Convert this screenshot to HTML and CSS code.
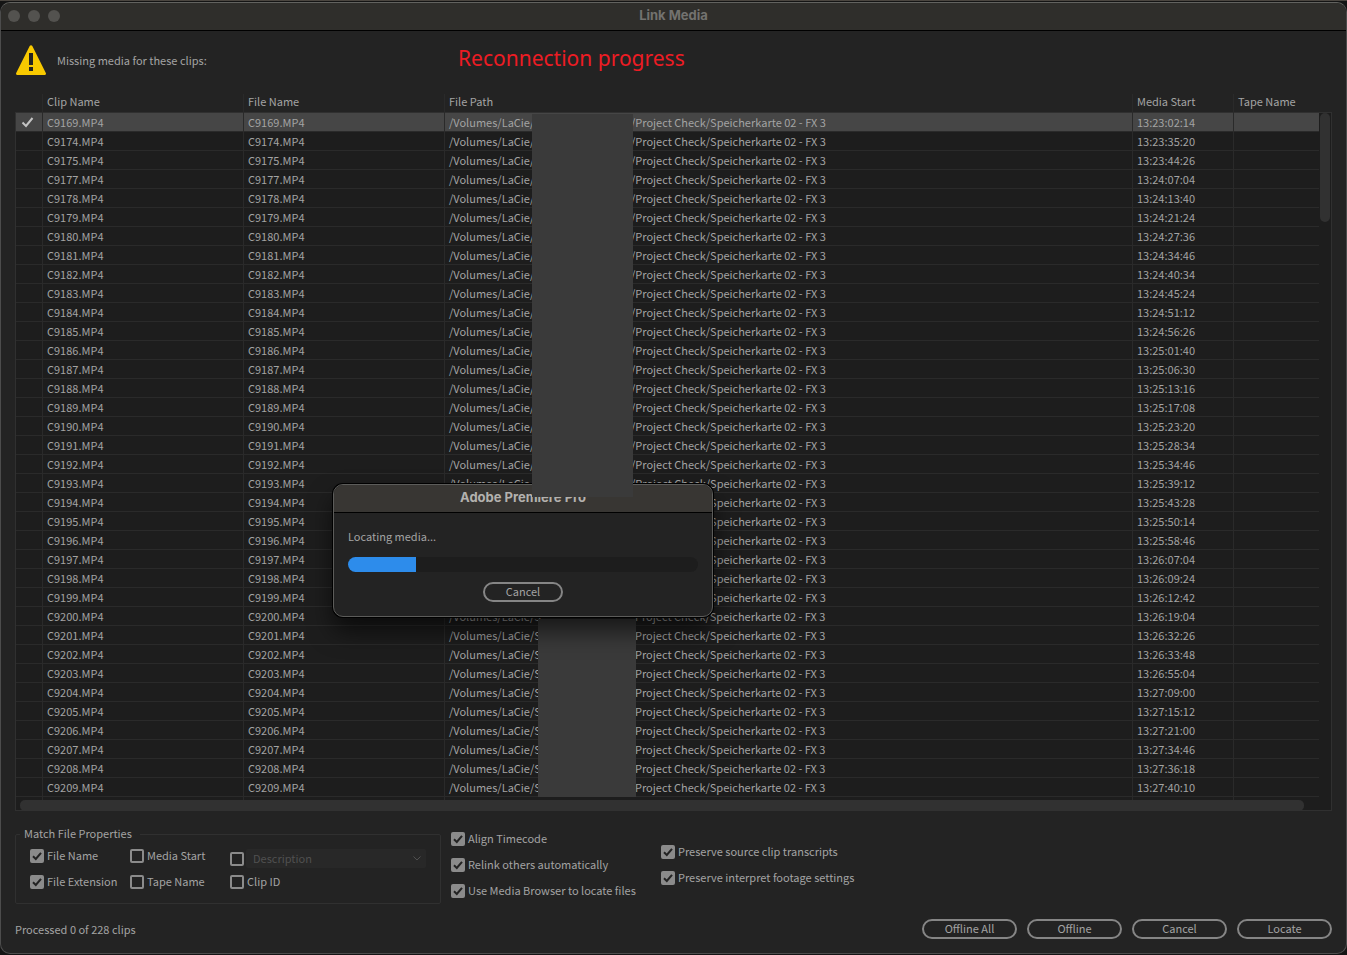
FILE: index.html
```html
<!DOCTYPE html>
<html lang="en">
<head>
    <meta charset="UTF-8">
    <meta name="viewport" content="width=device-width, initial-scale=1.0">
    <title>Link Media</title>
    <link rel="stylesheet" href="styles.css">
</head>
<body>

<div class="window">
    <div class="titlebar">
        <div class="lights"><span></span><span></span><span></span></div>
        <h1>Link Media</h1>
    </div>

    <div class="content">
        <div class="notice">
            <svg class="warning" viewBox="0 0 30 30" aria-hidden="true">
                <path d="M15 0.3c.6 0 1 .3 1.3.8L29.8 28c.5 1 0 2-1 2H1.2c-1 0-1.500-1-1-2L13.700 1.100C14 .6 14.400.3 15 .3z" fill="#f8c900"/>
                <path d="M13 8h4v12h-4zM13 22h4v4h-4z" fill="#232323"/>
            </svg>
            <span>Missing media for these clips:</span>
            <strong class="annotation">Reconnection progress</strong>
        </div>

        <div class="list">
            <div class="frame"></div>
            <div class="scroller">
                <table>
                    <colgroup>
                        <col class="col-check"><col class="col-name"><col class="col-name"><col><col class="col-start"><col class="col-tape">
                    </colgroup>
                    <thead>
                        <tr><th></th><th>Clip Name</th><th>File Name</th><th>File Path</th><th>Media Start</th><th>Tape Name</th></tr>
                    </thead>
                    <tbody id="clips"></tbody>
                </table>
            </div>
            <div class="scroll-y"></div>
            <div class="scroll-x"></div>
            <div class="redact redact-top"></div>
            <div class="redact redact-bottom"></div>
        </div>

        <div class="options">
            <fieldset>
                <legend>Match File Properties</legend>
                <div class="checks">
                    <label><input type="checkbox" checked>File Name</label>
                    <label><input type="checkbox" checked>File Extension</label>
                </div>
                <div class="checks">
                    <label><input type="checkbox">Media Start</label>
                    <label><input type="checkbox">Tape Name</label>
                </div>
                <div class="checks checks-wide">
                    <div class="describe">
                        <input type="checkbox" aria-label="Match description">
                        <select aria-label="Property" disabled><option>Description</option></select>
                    </div>
                    <label><input type="checkbox">Clip ID</label>
                </div>
            </fieldset>
            <div class="checks relink">
                <label><input type="checkbox" checked>Align Timecode</label>
                <label><input type="checkbox" checked>Relink others automatically</label>
                <label><input type="checkbox" checked>Use Media Browser to locate files</label>
            </div>
            <div class="checks preserve">
                <label><input type="checkbox" checked>Preserve source clip transcripts</label>
                <label><input type="checkbox" checked>Preserve interpret footage settings</label>
            </div>
        </div>

        <div class="footer">
            <span>Processed 0 of 228 clips</span>
            <div class="buttons">
                <button type="button">Offline All</button>
                <button type="button">Offline</button>
                <button type="button">Cancel</button>
                <button type="button">Locate</button>
            </div>
        </div>
    </div>
</div>

<div class="dialog" role="dialog" aria-labelledby="dialogTitle">
    <h2 id="dialogTitle">Adobe Premiere Pro</h2>
    <div class="dialog-body">
        <label for="locating">Locating media...</label>
        <progress id="locating" value="68" max="350"></progress>
        <button type="button">Cancel</button>
    </div>
</div>

<script src="script.js"></script>
</body>
</html>
```
FILE: styles.css
```css
* {
    box-sizing: border-box;
}

body {
    margin: 0;
    height: 100vh;
    padding: 1px 0;
    background-color: #141414;
    border-top: 1px solid #4b4640;
    color: #a3a3a3;
    font-family: "Noto Sans CJK SC", "Open Sans", sans-serif;
    font-size: 11px;
    line-height: 16px;
    overflow: hidden;
}

.window {
    display: flex;
    flex-direction: column;
    height: 100%;
    background-color: #232323;
    border: 1px solid #4c4c4c;
    border-top-color: #62625f;
    border-radius: 10px;
    overflow: hidden;
}

.titlebar {
    position: relative;
    flex: none;
    height: 28px;
    background-color: #2f2e2b;
    border-bottom: 1px solid #000;
}

.lights {
    position: absolute;
    left: 7px;
    top: 7px;
    display: flex;
    gap: 8px;
}

.lights span {
    width: 12px;
    height: 12px;
    border-radius: 50%;
    background-color: #53524f;
}

h1, h2 {
    margin: 0;
    font-family: Inter, "Open Sans", sans-serif;
    font-size: 13px;
    line-height: 25px;
    font-weight: 700;
    text-align: center;
}

h1 {
    color: #73726f;
}

.content {
    flex: 1;
    display: flex;
    flex-direction: column;
    min-height: 0;
    padding: 14px;
}

.notice {
    position: relative;
    flex: none;
    display: flex;
    align-items: center;
    gap: 11px;
    height: 30px;
    padding-left: 1px;
}

.warning {
    width: 30px;
    height: 30px;
}

.annotation {
    position: absolute;
    left: 443px;
    top: 0;
    color: #ed1c24;
    font-family: "Noto Sans", sans-serif;
    font-size: 21px;
    line-height: 26px;
    font-weight: 400;
}

/* clip list */
.list {
    position: relative;
    flex: 1;
    min-height: 0;
    display: grid;
    grid-template-columns: 1fr 13px;
    grid-template-rows: 19px minmax(0, 1fr) 11px;
    margin-top: 19px;
}

.frame {
    grid-area: 2 / 1 / 4 / 3;
    margin-top: -1px;
    background-color: #1d1d1d;
    border: 1px solid #303030;
}

.scroller {
    grid-area: 1 / 1 / 3 / 2;
    padding-left: 1px;
    overflow: hidden;
    z-index: 1;
}

table {
    width: 100%;
    table-layout: fixed;
    border-collapse: separate;
    border-spacing: 0;
}

.col-check {
    width: 27px;
}

.col-name {
    width: 201px;
}

.col-start {
    width: 101px;
}

.col-tape {
    width: 85px;
}

th, td {
    height: 19px;
    padding: 0 4px;
    line-height: 18px;
    font-weight: 400;
    text-align: left;
    white-space: nowrap;
    border-right: 1px solid #2a2a2a;
}

td {
    border-bottom: 1px solid #2a2a2a;
}

th {
    line-height: 14px;
    padding-bottom: 5px;
}

th:last-child, td:last-child {
    border-right: 0;
}

.selected td {
    background-color: #464646;
}

.tick {
    display: block;
    width: 14px;
    height: 11px;
}

.path {
    display: flex;
}

.root {
    width: 186px;
}

.root-short {
    width: 182px;
}

.scroll-y {
    grid-area: 2 / 2 / 3 / 3;
    width: 10px;
    height: 109px;
    margin-left: 1px;
    border-radius: 5px;
    background-color: #313131;
    z-index: 1;
}

.scroll-x {
    grid-area: 3 / 1 / 4 / 3;
    margin: 0 28px 0 5px;
    border-radius: 5px;
    background-color: #313131;
    z-index: 1;
}

/* blanked out part of the file paths */
.redact {
    position: absolute;
    background-color: #3a3a3a;
}

.redact-top {
    left: 517px;
    top: 20px;
    width: 101px;
    height: 383px;
    z-index: 3;
}

.redact-bottom {
    left: 523px;
    top: 525px;
    width: 98px;
    height: 178px;
    z-index: 1;
}

/* options */
.options {
    flex: none;
    display: flex;
    align-items: flex-start;
    margin-top: 15px;
}

fieldset {
    display: flex;
    width: 426px;
    height: 78px;
    margin: 0;
    padding: 6px 14px 0;
    border: 1px solid #303030;
    border-radius: 2px;
}

legend {
    margin-left: -10px;
    padding: 0 8px 2px 4px;
    line-height: 14px;
}

.checks {
    display: flex;
    flex-direction: column;
    gap: 10px;
    width: 100px;
}

.checks label {
    display: flex;
    gap: 3px;
    height: 16px;
    line-height: 14px;
    white-space: nowrap;
}

.checks label input {
    margin-top: 1px;
}

.checks-wide {
    width: 196px;
    gap: 6px;
}

.describe {
    display: flex;
    align-items: center;
    gap: 2px;
    height: 19px;
    margin-top: 1px;
}

.relink {
    width: 210px;
    margin: 5px 0 0 10px;
}

.preserve {
    margin-top: 18px;
}

input {
    appearance: none;
    flex: none;
    width: 14px;
    height: 14px;
    margin: 0;
    border: 2px solid #8b8b8b;
    border-radius: 2px;
}

input:checked {
    background: #8b8b8b url("data:image/svg+xml,%3Csvg xmlns='http://www.w3.org/2000/svg' viewBox='0 0 10 10'%3E%3Cpath d='M1 5.300L3.800 8L9 1.800' fill='none' stroke='%23232323' stroke-width='2'/%3E%3C/svg%3E") center / 10px no-repeat;
}

select {
    appearance: none;
    width: 180px;
    height: 19px;
    padding: 0 7px 2px;
    border: 0;
    border-radius: 2px;
    background: #282828 url("data:image/svg+xml,%3Csvg xmlns='http://www.w3.org/2000/svg' viewBox='0 0 8 5'%3E%3Cpath d='M.5.5L4 4L7.500.5' fill='none' stroke='%23505050'/%3E%3C/svg%3E") right 5px center / 8px 5px no-repeat;
    color: #505050;
    font: inherit;
    opacity: 1;
}

.footer {
    flex: none;
    display: flex;
    justify-content: space-between;
    align-items: center;
    margin-top: 15px;
}

.buttons {
    display: flex;
    gap: 10px;
}

button {
    width: 95px;
    height: 20px;
    padding: 0 0 2px;
    border: 2px solid #858585;
    border-radius: 10px;
    background: none;
    color: #a3a3a3;
    font: inherit;
    line-height: 14px;
}

/* progress dialog */
.dialog {
    position: absolute;
    left: 333px;
    top: 484px;
    width: 380px;
    height: 133px;
    background-color: #232323;
    border: 1px solid #5c5c5a;
    border-radius: 10px;
    box-shadow: 0 0 0 1px #000, 0 14px 24px rgba(0, 0, 0, 0.6);
    overflow: hidden;
    z-index: 2;
}

.dialog h2 {
    height: 28px;
    background-color: #383633;
    border-bottom: 1px solid #000;
    color: #b3b1ae;
}

.dialog-body {
    display: flex;
    flex-direction: column;
    padding: 15px 14px 0;
}

progress {
    appearance: none;
    width: 100%;
    height: 15px;
    margin: 13px 0 10px;
    border: 0;
    border-radius: 8px;
    overflow: hidden;
}

progress::-webkit-progress-bar {
    background-color: #1d1d1d;
}

progress::-webkit-progress-value {
    background-color: #2d8ceb;
}

.dialog button {
    width: 80px;
    align-self: center;
}
```
FILE: script.js
```js
const clips = [
    ['C9169', '13:23:02:14'], ['C9174', '13:23:35:20'], ['C9175', '13:23:44:26'],
    ['C9177', '13:24:07:04'], ['C9178', '13:24:13:40'], ['C9179', '13:24:21:24'],
    ['C9180', '13:24:27:36'], ['C9181', '13:24:34:46'], ['C9182', '13:24:40:34'],
    ['C9183', '13:24:45:24'], ['C9184', '13:24:51:12'], ['C9185', '13:24:56:26'],
    ['C9186', '13:25:01:40'], ['C9187', '13:25:06:30'], ['C9188', '13:25:13:16'],
    ['C9189', '13:25:17:08'], ['C9190', '13:25:23:20'], ['C9191', '13:25:28:34'],
    ['C9192', '13:25:34:46'], ['C9193', '13:25:39:12'], ['C9194', '13:25:43:28'],
    ['C9195', '13:25:50:14'], ['C9196', '13:25:58:46'], ['C9197', '13:26:07:04'],
    ['C9198', '13:26:09:24'], ['C9199', '13:26:12:42'], ['C9200', '13:26:19:04'],
    ['C9201', '13:26:32:26'], ['C9202', '13:26:33:48'], ['C9203', '13:26:55:04'],
    ['C9204', '13:27:09:00'], ['C9205', '13:27:15:12'], ['C9206', '13:27:21:00'],
    ['C9207', '13:27:34:46'], ['C9208', '13:27:36:18'], ['C9209', '13:27:40:10']
];

const tick = '<svg class="tick" viewBox="0 0 14 11"><path d="M2.500 5.500L6 9L12.500 1" fill="none" stroke="#c4c4c4" stroke-width="2"/></svg>';

const rows = clips.map(([name, start], i) => {
    // the lower block starts one letter further right and hides the slash
    const lower = i > 25;
    const root = lower
        ? '<span class="root">/Volumes/LaCie/S</span><span>'
        : '<span class="root root-short">/Volumes/LaCie/</span><span>/';
    return `<tr class="${i === 0 ? 'selected' : ''}">
        <td>${i === 0 ? tick : ''}</td>
        <td>${name}.MP4</td>
        <td>${name}.MP4</td>
        <td><div class="path">${root}Project Check/Speicherkarte 02 - FX 3</span></div></td>
        <td>${start}</td>
        <td></td>
    </tr>`;
});

// next row is cut off by the scrollbar
rows.push('<tr><td></td><td></td><td></td><td></td><td></td><td></td></tr>');

document.getElementById('clips').innerHTML = rows.join('');
```
